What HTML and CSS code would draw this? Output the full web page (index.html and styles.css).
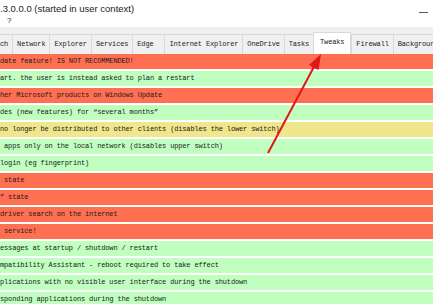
FILE: index.html
```html
<!DOCTYPE html>
<html>
  <head>
    <title>Tweaks</title>
    <link rel="stylesheet" href="styles.css">
  </head>
  <body>
    <div class="window">
      <div class="title-bar">
        <span class="title">.3.0.0.0 (started in user context)</span>
        <span class="minimize"></span>
      </div>
      <div class="menu-bar">
        <span class="menu-item">?</span>
      </div>
      <div class="tab-strip">
        <span class="tab cut">ch</span>
        <span class="tab">Network</span>
        <span class="tab">Explorer</span>
        <span class="tab">Services</span>
        <span class="tab edge">Edge</span>
        <span class="tab">Internet Explorer</span>
        <span class="tab">OneDrive</span>
        <span class="tab">Tasks</span>
        <span class="tab active">Tweaks</span>
        <span class="tab">Firewall</span>
        <span class="tab last">Backgroun</span>
      </div>
      <div class="rows">
        <div class="row bad">date feature! IS NOT RECOMMENDED!</div>
        <div class="row good">art. the user is instead asked to plan a restart</div>
        <div class="row bad">her Microsoft products on Windows Update</div>
        <div class="row good">des (new features) for “several months”</div>
        <div class="row warn">no longer be distributed to other clients (disables the lower switch)</div>
        <div class="row good"> apps only on the local network (disables upper switch)</div>
        <div class="row good">login (eg fingerprint)</div>
        <div class="row bad"> state</div>
        <div class="row bad">” state</div>
        <div class="row bad">driver search on the internet</div>
        <div class="row bad"> service!</div>
        <div class="row good">essages at startup / shutdown / restart</div>
        <div class="row good">mpatibility Assistant - reboot required to take effect</div>
        <div class="row good">plications with no visible user interface during the shutdown</div>
        <div class="row good">sponding applications during the shutdown</div>
      </div>
    </div>
    <svg class="arrow" width="433" height="304" viewBox="0 0 433 304">
      <line x1="268" y1="153" x2="316" y2="63" stroke="#e01818" stroke-width="2" />
      <polygon points="321,54 318.5,70 309,65" fill="#e01818" />
    </svg>
  </body>
</html>
```

FILE: styles.css
```css
* {
  margin: 0;
  padding: 0;
  box-sizing: border-box;
}

body {
  width: 433px;
  height: 304px;
  overflow: hidden;
  background-color: #fff;
  position: relative;
  font-family: "Liberation Mono", monospace;
}

.window {
  display: flex;
  flex-direction: column;
}

.title-bar {
  height: 14px;
  display: flex;
  justify-content: space-between;
  align-items: flex-end;
  font-family: "Liberation Sans", sans-serif;
  font-size: 9.5px;
  color: #222;
}

.minimize {
  width: 9px;
  height: 1px;
  background-color: #555;
  margin: 0 5px 1px 0;
}

.menu-bar {
  height: 13px;
  display: flex;
  align-items: center;
  padding-left: 7px;
  font-family: "Liberation Sans", sans-serif;
  font-size: 8px;
  color: #222;
}

.tab-strip {
  height: 27px;
  background-color: #f0f0f0;
  display: flex;
  align-items: flex-end;
  padding-top: 7px;
  white-space: nowrap;
  overflow: hidden;
}

.tab {
  height: 20px;
  line-height: 18px;
  padding: 0 4px;
  border: 1px solid #d9d9d9;
  border-bottom: none;
  border-right: none;
  font-size: 7px;
  letter-spacing: -0.15px;
  color: #222;
  background-color: #f0f0f0;
}

.tab.cut {
  padding: 0 4px 0 0;
  border-left: none;
}

.tab.edge {
  padding-right: 11px;
}

.tab.active {
  height: 23px;
  line-height: 19px;
  background-color: #fff;
  padding: 0 6px;
  margin-bottom: -1px;
  border-right: 1px solid #d9d9d9;
  position: relative;
}

.tab.last {
  padding-right: 0;
}

.rows {
  display: flex;
  flex-direction: column;
  gap: 2px;
}

.row {
  height: 15px;
  line-height: 15px;
  font-size: 7px;
  letter-spacing: -0.15px;
  color: #1a1a1a;
  white-space: pre;
  overflow: hidden;
}

.row.bad {
  background-color: #ff7052;
}

.row.good {
  background-color: #c0ffc0;
}

.row.warn {
  background-color: #f0e68c;
}

.arrow {
  position: absolute;
  left: 0;
  top: 0;
}
```
